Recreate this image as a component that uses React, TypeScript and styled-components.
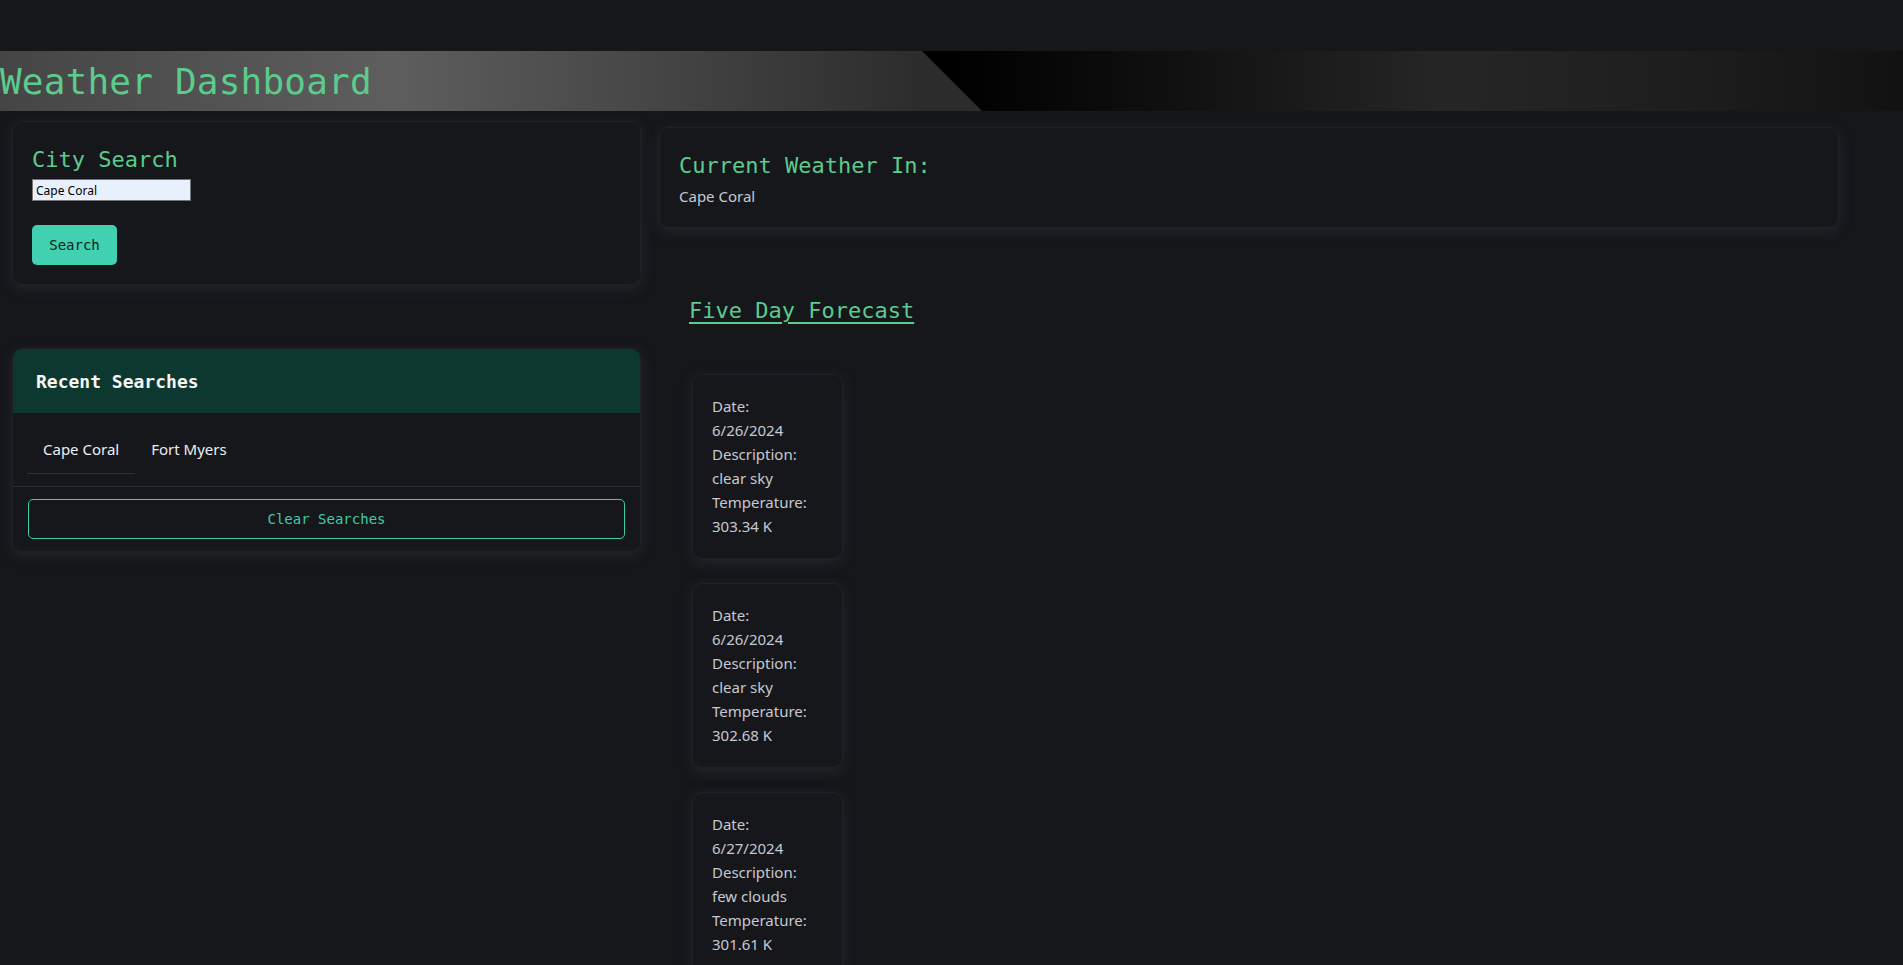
import React from "react";
import styled, { createGlobalStyle } from "styled-components";

const GlobalStyle = createGlobalStyle`
  html, body {
    margin: 0;
    padding: 0;
    background: #16171b;
    color: #c6c9d1;
    font-family: "Noto Sans", "Open Sans", sans-serif;
  }
  * { box-sizing: border-box; }
`;

const mono = `"DejaVu Sans Mono", "Liberation Mono", monospace`;

const Header = styled.header`
  margin-top: 51px;
  height: 60px;
  background: linear-gradient(90deg, #000 50%, #0e0e0e 60%, #262626 76%, #1e1e1e 88%, #121212 100%);
`;

const TitleBar = styled.div`
  width: 982px;
  height: 100%;
  display: flex;
  align-items: center;
  background: linear-gradient(90deg, #454545 0%, #5e5e5e 40%, #2c2c2c 94%);
  clip-path: polygon(0 0, 922px 0, 982px 100%, 0 100%);
  >h1{
    margin: 0;
    font-family: ${mono};
    font-weight: normal;
    font-size: 36px;
    letter-spacing: 0.2px;
    color: #5ccb8d;
  }
`;

const Main = styled.main`
  display: flex;
  align-items: flex-start;
  gap: 18px;
  padding: 0 0 40px 12px;
`;

const LeftColumn = styled.div`
  width: 629px;
  flex-shrink: 0;
  display: flex;
  flex-direction: column;
  gap: 63px;
  padding-top: 10px;
`;

const RightColumn = styled.div`
  width: 1180px;
  padding-top: 16px;
`;

const Card = styled.section`
  background: #16171b;
  border: 1px solid #202127;
  border-radius: 10px;
  box-shadow: 0 4px 14px rgba(60, 62, 70, 0.35);
  overflow: hidden;
`;

const PaddedCard = styled(Card)`
  padding: 21px 19px 19px 19px;
`;

const Heading = styled.h2<{ $underline?: boolean }>`
  margin: 0;
  font-family: ${mono};
  font-weight: normal;
  font-size: 22px;
  line-height: 33px;
  color: #5ccb8d;
  text-decoration: ${(p) => (p.$underline ? "underline" : "none")};
  text-underline-offset: 4px;
  text-decoration-thickness: 2px;
`;

const CityInput = styled.input`
  display: block;
  margin-top: 3px;
  width: 159px;
  height: 22px;
  padding: 0 3px;
  border: 1px solid #767676;
  background: #e8f0fe;
  color: #000;
  font-family: "Noto Sans", sans-serif;
  font-size: 12px;
`;

const SearchButton = styled.button`
  margin-top: 24px;
  width: 85px;
  height: 40px;
  border: none;
  border-radius: 5px;
  background: #41d0b0;
  color: #10221d;
  font-family: ${mono};
  font-size: 14px;
`;

const Plain = styled.p`
  margin: 2px 0 0;
  font-size: 15px;
  line-height: 24px;
  color: #c6c9d1;
`;

const RecentHeader = styled.div`
  background: #0d3830;
  height: 64px;
  display: flex;
  align-items: center;
  padding: 0 23px;
  font-family: ${mono};
  font-weight: bold;
  font-size: 18px;
  color: #f5f5f5;
`;

const Tabs = styled.ul`
  display: flex;
  margin: 0;
  padding: 13px 14px 12px;
  list-style: none;
  border-bottom: 1px solid #2c2d34;
`;

const Tab = styled.li<{ $active?: boolean }>`
  padding: 12px 16px;
  font-size: 15px;
  line-height: 23px;
  color: #eceef2;
  border-bottom: 1px solid ${(p) => (p.$active ? "#2f3037" : "transparent")};
`;

const ClearRow = styled.div`
  padding: 12px 15px;
`;

const ClearButton = styled.button`
  width: 100%;
  height: 40px;
  border: 1px solid #3dcca8;
  border-radius: 5px;
  background: transparent;
  color: #3dcca8;
  font-family: ${mono};
  font-size: 14px;
`;

const Forecast = styled.div`
  padding: 66px 0 0 30px;
`;

const DayList = styled.div`
  margin-top: 47px;
  display: flex;
  flex-direction: column;
  gap: 24px;
`;

const DayCard = styled(Card)`
  width: 151px;
  padding: 19px 19px 20px;
  margin-left: 3px;
  font-size: 15px;
  line-height: 24px;
  color: #c6c9d1;
  >div{
    white-space: nowrap;
  }
`;

const days = [
  { date: "6/26/2024", desc: "clear sky", temp: "303.34 K" },
  { date: "6/26/2024", desc: "clear sky", temp: "302.68 K" },
  { date: "6/27/2024", desc: "few clouds", temp: "301.61 K" },
  { date: "6/27/2024", desc: "few clouds", temp: "300.87 K" },
  { date: "6/28/2024", desc: "clear sky", temp: "302.12 K" },
];

function App() {
  return (
    <>
      <GlobalStyle />
      <Header>
        <TitleBar>
          <h1>Weather Dashboard</h1>
        </TitleBar>
      </Header>
      <Main>
        <LeftColumn>
          <PaddedCard>
            <Heading>City Search</Heading>
            <CityInput type="text" defaultValue="Cape Coral" />
            <SearchButton>Search</SearchButton>
          </PaddedCard>
          <Card>
            <RecentHeader>Recent Searches</RecentHeader>
            <Tabs>
              <Tab $active>Cape Coral</Tab>
              <Tab>Fort Myers</Tab>
            </Tabs>
            <ClearRow>
              <ClearButton>Clear Searches</ClearButton>
            </ClearRow>
          </Card>
        </LeftColumn>
        <RightColumn>
          <PaddedCard>
            <Heading>Current Weather In:</Heading>
            <Plain>Cape Coral</Plain>
          </PaddedCard>
          <Forecast>
            <Heading $underline>Five Day Forecast</Heading>
            <DayList>
              {days.map((d, i) => (
                <DayCard key={i}>
                  <div>Date:</div>
                  <div>{d.date}</div>
                  <div>Description:</div>
                  <div>{d.desc}</div>
                  <div>Temperature:</div>
                  <div>{d.temp}</div>
                </DayCard>
              ))}
            </DayList>
          </Forecast>
        </RightColumn>
      </Main>
    </>
  );
}

export default App;
